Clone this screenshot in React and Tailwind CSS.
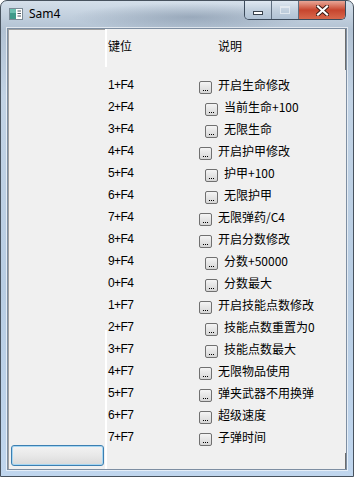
import React from "react";

// Rows of the hotkey table: [key, label, indented]
const ROWS = [
  ["1+F4", "开启生命修改", false],
  ["2+F4", "当前生命+100", true],
  ["3+F4", "无限生命", true],
  ["4+F4", "开启护甲修改", false],
  ["5+F4", "护甲+100", true],
  ["6+F4", "无限护甲", true],
  ["7+F4", "无限弹药/C4", false],
  ["8+F4", "开启分数修改", false],
  ["9+F4", "分数+50000", true],
  ["0+F4", "分数最大", true],
  ["1+F7", "开启技能点数修改", false],
  ["2+F7", "技能点数重置为0", true],
  ["3+F7", "技能点数最大", true],
  ["4+F7", "无限物品使用", false],
  ["5+F7", "弹夹武器不用换弹", false],
  ["6+F7", "超级速度", false],
  ["7+F7", "子弹时间", false],
];

const CJK = "font-['Noto_Sans_CJK_SC',sans-serif]";

function DotsButton() {
  return (
    <div className="mt-[5px] w-[13px] h-[13px] rounded-[2px] border border-[#707070] bg-gradient-to-b from-[#f4f4f4] to-[#d6d6d6] flex items-end justify-center gap-[1px] pb-[2px] shrink-0">
      <span className="w-px h-px bg-black" />
      <span className="w-px h-px bg-black" />
      <span className="w-px h-px bg-black" />
    </div>
  );
}

function AppIcon() {
  return (
    <svg width="14" height="12" viewBox="0 0 14 12">
      <rect x="0.5" y="0.5" width="13" height="11" fill="#fff" stroke="#7a8a96" />
      <rect x="1" y="1" width="6" height="10" fill="#3f9a8a" />
      <rect x="1" y="1" width="6" height="4" fill="#6cc0b0" />
      <line x1="8.5" y1="3" x2="12" y2="3" stroke="#4a5560" />
      <line x1="8.5" y1="5.5" x2="12" y2="5.5" stroke="#4a5560" />
      <line x1="8.5" y1="8" x2="12" y2="8" stroke="#4a5560" />
    </svg>
  );
}

function CaptionButtons() {
  return (
    <div className="flex h-[19px] self-start border border-t-0 border-[#3c4b5b] rounded-b-[5px] overflow-hidden">
      <div className="w-[27px] h-full bg-gradient-to-b from-[#dfe8f1] via-[#c2d0de] to-[#b0c2d4] flex items-center justify-center border-r border-[#5f6f80]">
        <div className="w-[10px] h-[4px] mt-[5px] bg-white border border-[#39424c]" />
      </div>
      <div className="w-[27px] h-full bg-gradient-to-b from-[#dfe8f1] via-[#c2d0de] to-[#b0c2d4] flex items-center justify-center border-r border-[#5f6f80]">
        <div className="w-[10px] h-[8px] border border-[#e9eef3] border-t-2 opacity-80" />
      </div>
      <div className="w-[46px] h-full bg-gradient-to-b from-[#e8a697] via-[#c7452e] to-[#d8684c] flex items-center justify-center">
        <svg width="13" height="11" viewBox="0 0 13 11">
          <path d="M2 1.5 L11 9.5 M11 1.5 L2 9.5" stroke="#3a1a14" strokeWidth="4" strokeLinecap="square" />
          <path d="M2 1.5 L11 9.5 M11 1.5 L2 9.5" stroke="#fff" strokeWidth="2.2" strokeLinecap="square" />
        </svg>
      </div>
    </div>
  );
}

export default function App() {
  return (
    <div className="w-[354px] h-[477px] flex flex-col border border-[#47525e] rounded-t-[7px] overflow-hidden bg-[linear-gradient(180deg,#d4dfea_0%,#b2c2d3_6%,#c2d3e5_20%,#b8cde3_60%,#c0d6ee_100%)]">
      {/* title bar */}
      <div className="h-[27px] flex items-start pl-[8px] pr-[7px] bg-[radial-gradient(ellipse_120px_14px_at_190px_16px,rgba(80,100,125,0.35),transparent)]">
        <div className="mt-[7px]">
          <AppIcon />
        </div>
        <span className="ml-[6px] mt-[5px] text-[12px] leading-[16px] text-black font-['Noto_Sans','Liberation_Sans',sans-serif]">
          Sam4
        </span>
        <div className="flex-1" />
        <CaptionButtons />
      </div>

      {/* client area */}
      <div className="mx-[6px] mb-[6px] flex-1 border border-[#7d8ea2] shadow-[0_0_0_1px_rgba(255,255,255,0.6)] bg-[#f0f0f0] flex">
        {/* left panel */}
        <div className="w-[97px] flex flex-col border-l border-t border-[#a0a0a0]">
          <div className="flex-1" />
          <div className="ml-[2px] mb-[3px] w-[93px] h-[21px] rounded-[3px] border border-[#3c7fb1] bg-gradient-to-b from-[#f3f3f3] via-[#e8e8e8] to-[#d9d9d9] shadow-[inset_0_0_0_1px_#a6d6f2]" />
        </div>

        {/* white separator, partially painted */}
        <div className="w-[2px] flex flex-col">
          <div className="h-[38px] bg-white" />
          <div className="flex-1" />
          <div className="h-[139px] bg-white" />
        </div>

        {/* table */}
        <div className="flex-1 flex flex-col pl-[1px] pt-[6px] text-black">
          <div className={`h-[22px] flex items-center text-[12px] ${CJK}`}>
            <span className="w-[110px]">键位</span>
            <span>说明</span>
          </div>
          <div className="h-[17px]" />
          {ROWS.map(([key, label, indent]) => (
            <div key={key} className="h-[22px] flex items-center">
              <span className="w-[91px] text-[12px] tracking-[-0.6px] font-['Liberation_Sans',sans-serif]">{key}</span>
              <div className={indent ? "ml-[6px]" : ""}>
                <DotsButton />
              </div>
              <span className={`ml-[6px] text-[12px] leading-[14px] ${CJK}`}>{label}</span>
            </div>
          ))}
        </div>

        {/* right edge, partially painted */}
        <div className="w-px flex flex-col">
          <div className="h-[41px] bg-[#6d6d6d]" />
          <div className="flex-1" />
          <div className="h-[16px] bg-[#6d6d6d]" />
        </div>
      </div>
    </div>
  );
}
